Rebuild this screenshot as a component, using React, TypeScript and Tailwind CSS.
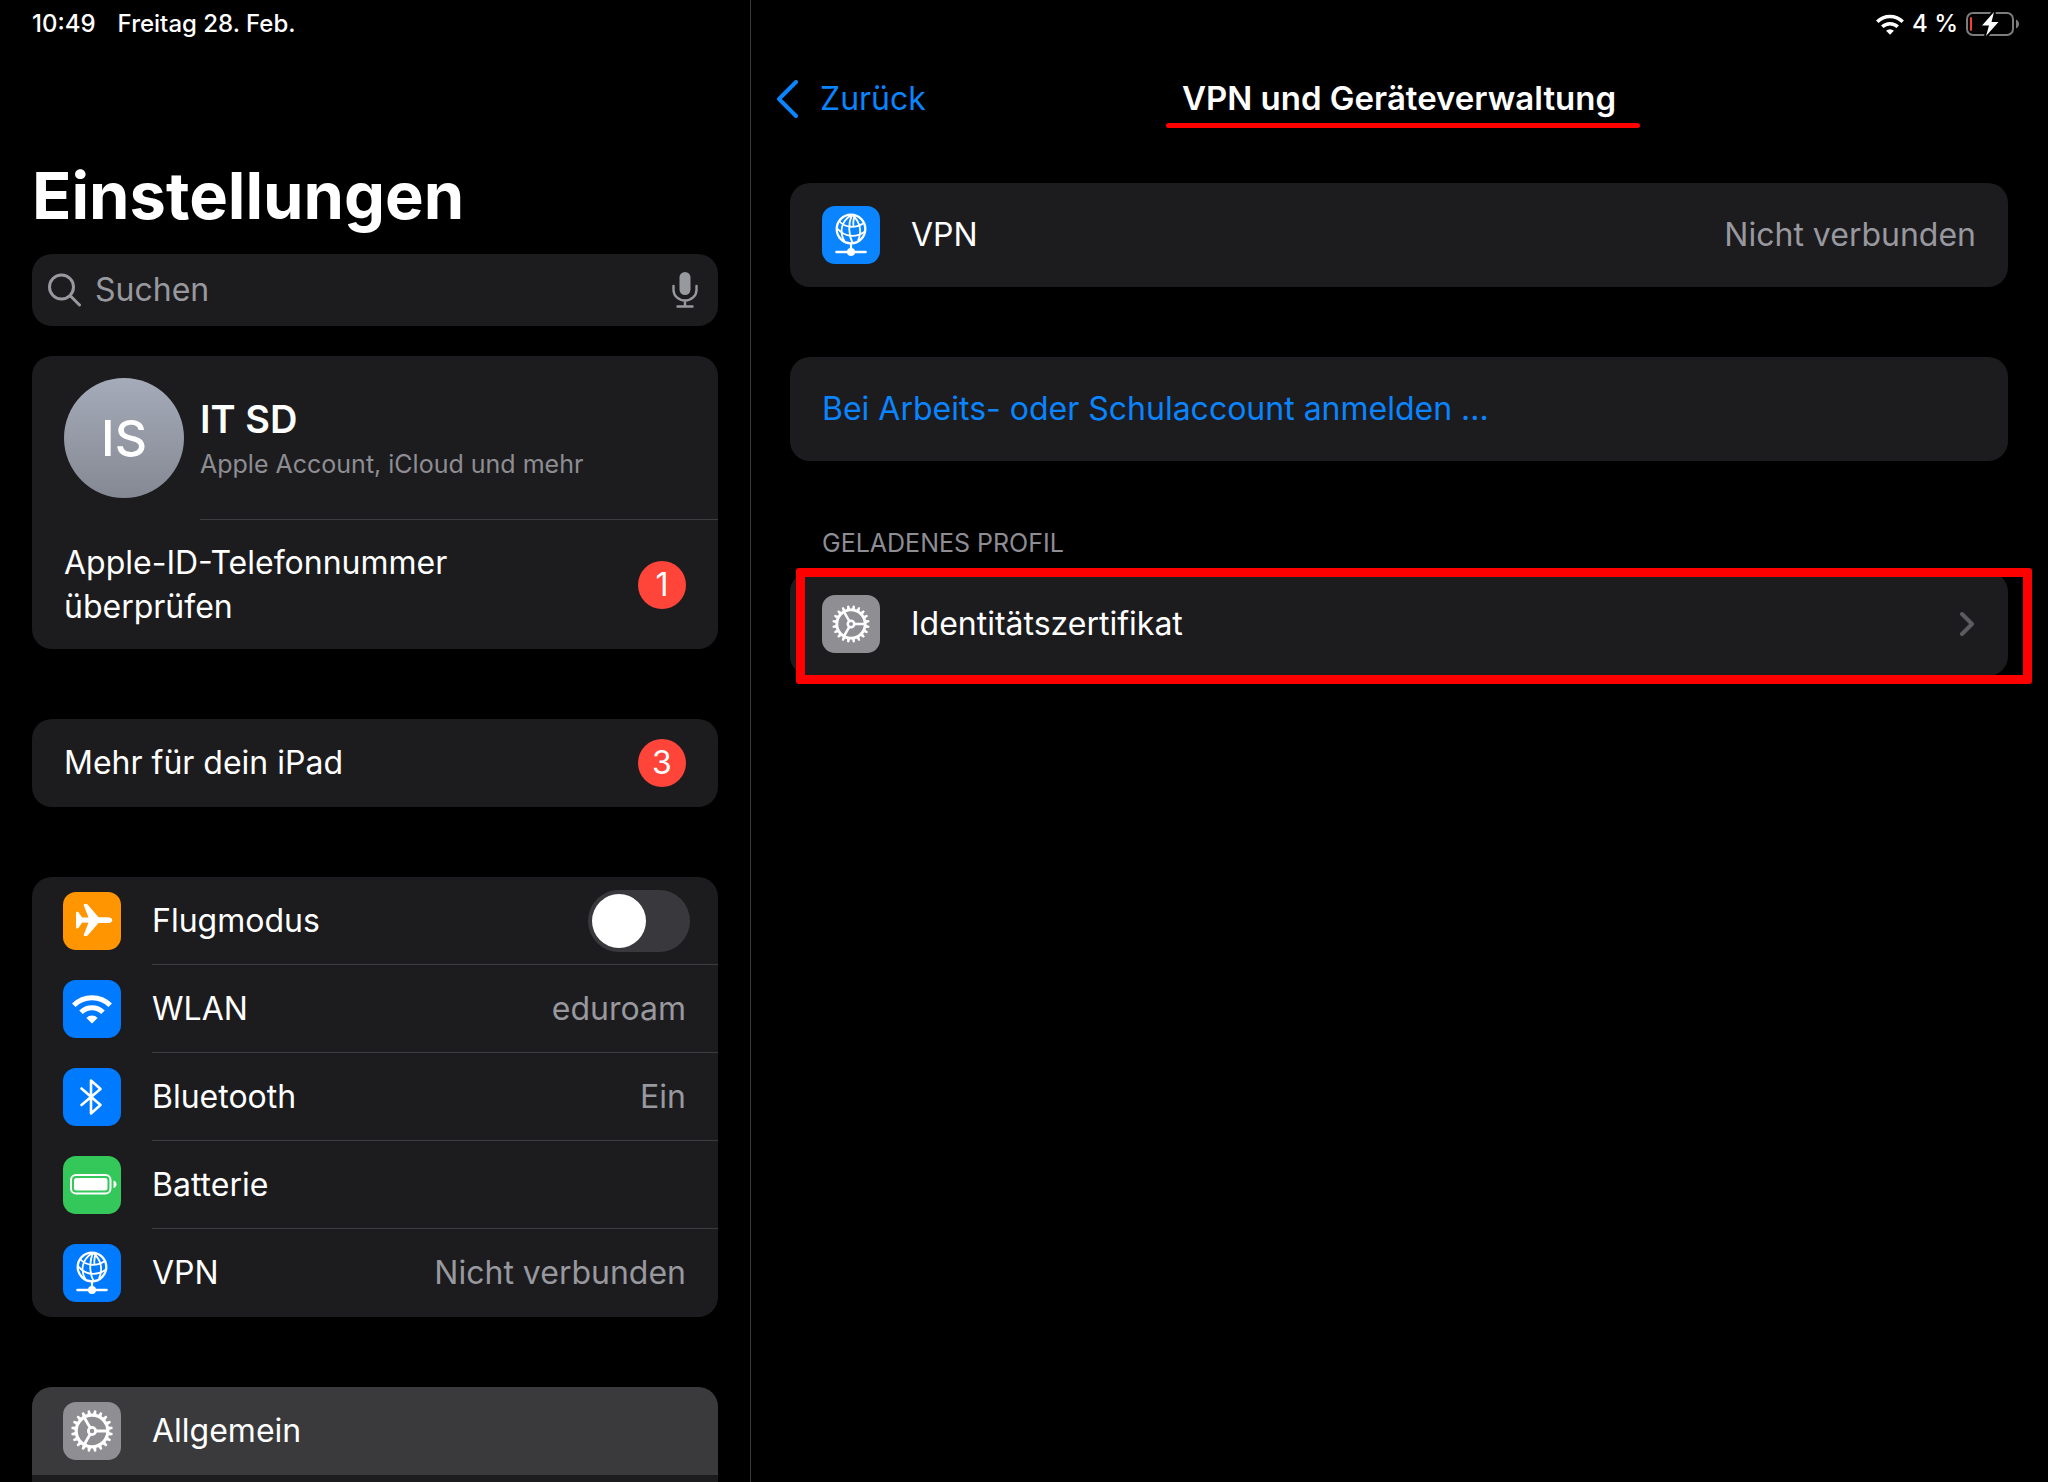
import React from 'react';

type IconProps = { className?: string };

const TEETH = Array.from({ length: 20 }, (_, i) => i * 18);

const PlaneIcon: React.FC<IconProps> = ({ className }) => (
  <svg viewBox="0 0 58 58" fill="currentColor" className={className} aria-hidden="true">
    <path d="M13 21c0-1 .4-1.200 1-1.200.900 0 1.500.3 2 1.100l3.200 4.700 6.300-.1-4.700-12.100c-.3-.8 0-1.400.9-1.400h1.600c.7 0 1.100.3 1.500.8L35.500 25.300h9.200c2.700 0 4.600 1.300 4.600 2.900s-1.900 2.900-4.600 2.900h-9.200L24.800 43.200c-.4.5-.8.8-1.500.8h-1.600c-.9 0-1.200-.6-.9-1.400l4.700-11.900-6.300-.1-3.200 4.700c-.5.8-1.100 1.100-2 1.100-.6 0-1-.3-1-1.200V21z" />
  </svg>
);

const WifiGlyph: React.FC<IconProps> = ({ className }) => (
  <svg viewBox="0 0 40 30" fill="none" stroke="currentColor" strokeWidth="5" className={className} aria-hidden="true">
    <path d="M1.800 11.200a25.800 25.800 0 0 1 36.400 0" />
    <path d="M9 18.300a15.600 15.600 0 0 1 22 0" />
    <path d="M20 29.500l-5.600-5.600a8 8 0 0 1 11.200 0z" fill="currentColor" stroke="none" />
  </svg>
);

const BluetoothIcon: React.FC<IconProps> = ({ className }) => (
  <svg viewBox="0 0 58 58" fill="none" stroke="currentColor" strokeWidth="2.600" strokeLinecap="round" strokeLinejoin="round" className={className} aria-hidden="true">
    <path d="M18.500 20.500L37.500 37 28 45.500v-33l9.500 8.500-19 16" />
  </svg>
);

const BatteryIcon: React.FC<IconProps> = ({ className }) => (
  <svg viewBox="0 0 58 58" fill="currentColor" className={className} aria-hidden="true">
    <rect x="8" y="19" width="39.500" height="18.500" rx="5" fill="none" stroke="currentColor" strokeWidth="2" />
    <rect x="11" y="22" width="33.500" height="12.500" rx="2.500" />
    <path d="M50.500 24.500c2 .6 3 2 3 3.800s-1 3.200-3 3.800z" />
  </svg>
);

const VpnIcon: React.FC<IconProps> = ({ className }) => (
  <svg viewBox="0 0 58 58" fill="none" stroke="currentColor" strokeWidth="1.800" className={className} aria-hidden="true">
    <circle cx="29" cy="23" r="14.300" strokeWidth="2.300" />
    <path d="M30 8.700C19 15 17 26 22.500 35.500M30 8.700C26 18 26.500 29 30.500 37M30 8.700c8.500 7 10 17 6 26M33 9.500c-1.500 3-2 7-1.500 11" />
    <path d="M17.500 15.500c6 6.500 16 7 24.500 1.500M14.800 22c8 9.500 19 10 28.200 3.500" />
    <path d="M29 37.300v8" strokeWidth="2.200" />
    <path d="M14.500 46h29" strokeWidth="2.600" strokeLinecap="round" />
    <circle cx="29" cy="46" r="4" fill="currentColor" stroke="none" />
  </svg>
);

const GearIcon: React.FC<IconProps> = ({ className }) => (
  <svg viewBox="0 0 58 58" fill="none" stroke="currentColor" className={className} aria-hidden="true">
    <circle cx="29" cy="29" r="15.800" strokeWidth="3.200" />
    {TEETH.map((angle) => (
      <path key={angle} d="M27 13h4l-1-4.800h-2z" fill="currentColor" stroke="none" transform={`rotate(${angle + 9} 29 29)`} />
    ))}
    <circle cx="29" cy="29" r="3.600" strokeWidth="2.800" />
    <path d="M33 29h11M27 25.500l-5.500-9.500M27 32.500l-5.500 9.500" strokeWidth="2.800" />
  </svg>
);

const BatteryStatus: React.FC<IconProps> = ({ className }) => (
  <svg viewBox="0 0 54 26" className={className} aria-hidden="true">
    <rect x="1" y="2" width="46" height="22" rx="6" fill="none" stroke="#7c7c7c" strokeWidth="2" />
    <path d="M50 8.500c2 .7 3 2.300 3 4.500s-1 3.800-3 4.500z" fill="#7c7c7c" />
    <rect x="4" y="6" width="2" height="14" rx="1" fill="#ff3b30" />
    <path d="M28 1L16 14.500h7L20 25l12.500-14H25.500L28 1z" fill="#fff" stroke="#000" strokeWidth="4" paintOrder="stroke" />
  </svg>
);

const IconTile: React.FC<{ color: string; children: React.ReactNode }> = ({ color, children }) => (
  <span className={`flex size-[58px] shrink-0 items-center justify-center overflow-hidden rounded-[13px] text-white ${color}`}>
    {children}
  </span>
);

const Badge: React.FC<{ count: number }> = ({ count }) => (
  <span className="flex size-12 shrink-0 items-center justify-center rounded-full bg-[#ff453a]">{count}</span>
);

const connections = [
  { label: 'WLAN', value: 'eduroam', color: 'bg-[#007aff]', icon: <WifiGlyph className="w-10" /> },
  { label: 'Bluetooth', value: 'Ein', color: 'bg-[#007aff]', icon: <BluetoothIcon /> },
  { label: 'Batterie', value: '', color: 'bg-[#34c759]', icon: <BatteryIcon /> },
  { label: 'VPN', value: 'Nicht verbunden', color: 'bg-[#007aff]', icon: <VpnIcon /> },
];

const Sidebar: React.FC = () => (
  <aside className="flex w-[750px] shrink-0 flex-col px-8">
    <div className="flex h-12 shrink-0 items-center gap-[22px] text-[24px] font-medium">
      <span>10:49</span>
      <span>Freitag 28. Feb.</span>
    </div>

    <h1 className="mt-[110px] text-[65px] leading-[76px] font-bold">Einstellungen</h1>

    {/* Search */}
    <div className="mt-5 flex h-[72px] shrink-0 items-center rounded-[20px] bg-[#1c1c1e] pr-5 pl-4 text-[#98989f]">
      <svg viewBox="0 0 34 34" fill="none" stroke="currentColor" strokeWidth="3" strokeLinecap="round" className="size-[34px]" aria-hidden="true">
        <circle cx="13.500" cy="14" r="12" />
        <path d="M22.500 23l9 9" />
      </svg>
      <input
        type="search"
        aria-label="Suchen"
        placeholder="Suchen"
        className="ml-[13px] min-w-0 flex-1 bg-transparent outline-none placeholder:text-[#98989f]"
      />
      <button aria-label="Diktieren">
        <svg viewBox="0 0 26 36" fill="none" stroke="currentColor" strokeWidth="2.400" strokeLinecap="round" className="h-9 w-[26px]" aria-hidden="true">
          <rect x="7.500" y="0" width="11" height="23" rx="5.500" fill="currentColor" stroke="none" />
          <path d="M1.500 14v4a11.500 10.500 0 0 0 23 0v-4M13 29v5M5.500 34.500h15" />
        </svg>
      </button>
    </div>

    {/* Account */}
    <section className="mt-[30px] shrink-0 rounded-[20px] bg-[#1c1c1e]">
      <button className="flex w-full items-center pl-8 text-left">
        <span className="flex size-[120px] shrink-0 items-center justify-center rounded-full bg-linear-to-b from-[#a5abb9] to-[#858993] text-[50px] font-medium">
          IS
        </span>
        <span className="ml-4 flex h-[164px] flex-1 flex-col justify-center border-b border-[#3d3d41] pt-1">
          <span className="text-[38px] leading-[48px] font-semibold">IT SD</span>
          <span className="text-[25px] leading-[42px] text-[#8d8d93]">Apple Account, iCloud und mehr</span>
        </span>
      </button>
      <button className="flex h-[129px] w-full items-center justify-between px-8 text-left leading-[44px]">
        <span className="max-w-[480px]">Apple-ID-Telefonnummer überprüfen</span>
        <Badge count={1} />
      </button>
    </section>

    <button className="mt-[70px] flex h-[88px] shrink-0 items-center justify-between rounded-[20px] bg-[#1c1c1e] px-8">
      <span>Mehr für dein iPad</span>
      <Badge count={3} />
    </button>

    {/* Connections */}
    <section className="mt-[70px] shrink-0 rounded-[20px] bg-[#1c1c1e]">
      <label className="flex h-[88px] items-center pl-[31px]">
        <IconTile color="bg-[#ff9500]">
          <PlaneIcon />
        </IconTile>
        <span className="ml-[31px] flex h-full flex-1 items-center justify-between border-b border-[#3d3d41] pr-7">
          Flugmodus
          <input
            type="checkbox"
            role="switch"
            className="flex h-[62px] w-[102px] appearance-none items-center rounded-full bg-[#39393d] px-1 before:size-[54px] before:rounded-full before:bg-white checked:justify-end checked:bg-[#34c759]"
          />
        </span>
      </label>
      {connections.map((item) => (
        <button key={item.label} className="group flex h-[88px] w-full items-center pl-[31px]">
          <IconTile color={item.color}>{item.icon}</IconTile>
          <span className="ml-[31px] flex h-full flex-1 items-center justify-between border-b border-[#3d3d41] pr-8 group-last:border-transparent">
            {item.label}
            <span className="text-[#98989f]">{item.value}</span>
          </span>
        </button>
      ))}
    </section>

    {/* General */}
    <section className="mt-[70px] min-h-[88px] flex-1 overflow-hidden rounded-t-[20px] bg-[#1c1c1e]">
      <button className="flex h-[88px] w-full items-center gap-[31px] bg-[#3a3a3c] pl-[31px]">
        <IconTile color="bg-[#8e8e93]">
          <GearIcon />
        </IconTile>
        Allgemein
      </button>
    </section>
  </aside>
);

const Detail: React.FC = () => (
  <main className="flex flex-1 flex-col border-l border-[#38383a] pr-10 pl-[39px]">
    <div className="-mr-3 flex h-12 shrink-0 items-center justify-end text-[24px] font-medium">
      <WifiGlyph className="w-7" />
      <span className="mr-2 ml-2">4 %</span>
      <BatteryStatus className="h-[26px] w-[54px]" />
    </div>

    <header className="grid h-[102px] shrink-0 grid-cols-[1fr_auto_1fr] items-center">
      <button className="-ml-3.5 flex items-center gap-[22px] justify-self-start text-[#0a84ff]">
        <svg viewBox="0 0 22 38" fill="none" stroke="currentColor" strokeWidth="4" strokeLinecap="round" strokeLinejoin="round" className="h-[38px] w-[22px]" aria-hidden="true">
          <path d="M20 2L3 19l17 17" />
        </svg>
        Zurück
      </button>
      <div className="relative">
        <h2 className="text-[33px] font-semibold">VPN und Geräteverwaltung</h2>
        <span className="absolute -right-6 -bottom-1 -left-4 h-[5px] rounded-full bg-[#ff0000]"></span>
      </div>
    </header>

    <button className="mt-[33px] flex h-[104px] shrink-0 items-center rounded-[20px] bg-[#1c1c1e] px-8">
      <IconTile color="bg-[#0a84ff]">
        <VpnIcon />
      </IconTile>
      <span className="ml-[31px]">VPN</span>
      <span className="ml-auto text-[#98989f]">Nicht verbunden</span>
    </button>

    <button className="mt-[70px] flex h-[104px] shrink-0 items-center rounded-[20px] bg-[#1c1c1e] px-8 text-[#0a84ff]">
      Bei Arbeits- oder Schulaccount anmelden ...
    </button>

    <h3 className="mt-[66px] pl-8 text-[25px] leading-8 text-[#8d8d93]">GELADENES PROFIL</h3>
    <div className="relative mt-[13px]">
      <button className="flex h-[104px] w-full items-center rounded-[20px] bg-[#1c1c1e] px-8">
        <IconTile color="bg-[#8e8e93]">
          <GearIcon className="size-[52px]" />
        </IconTile>
        <span className="ml-[31px]">Identitätszertifikat</span>
        <svg viewBox="0 0 16 26" fill="none" stroke="#5b5b60" strokeWidth="4" strokeLinecap="round" strokeLinejoin="round" className="ml-auto h-[26px] w-4" aria-hidden="true">
          <path d="M2 3l10 10L2 23" />
        </svg>
      </button>
      <div className="pointer-events-none absolute -top-1 -right-6 -bottom-2 left-1.5 rounded-[3px] border-[9px] border-[#ff0000]"></div>
    </div>
  </main>
);

const App: React.FC = () => {
  return (
    <div className="flex h-screen overflow-hidden bg-black font-['Inter',sans-serif] text-[32px] text-white">
      <Sidebar />
      <Detail />
    </div>
  );
};

export default App;
